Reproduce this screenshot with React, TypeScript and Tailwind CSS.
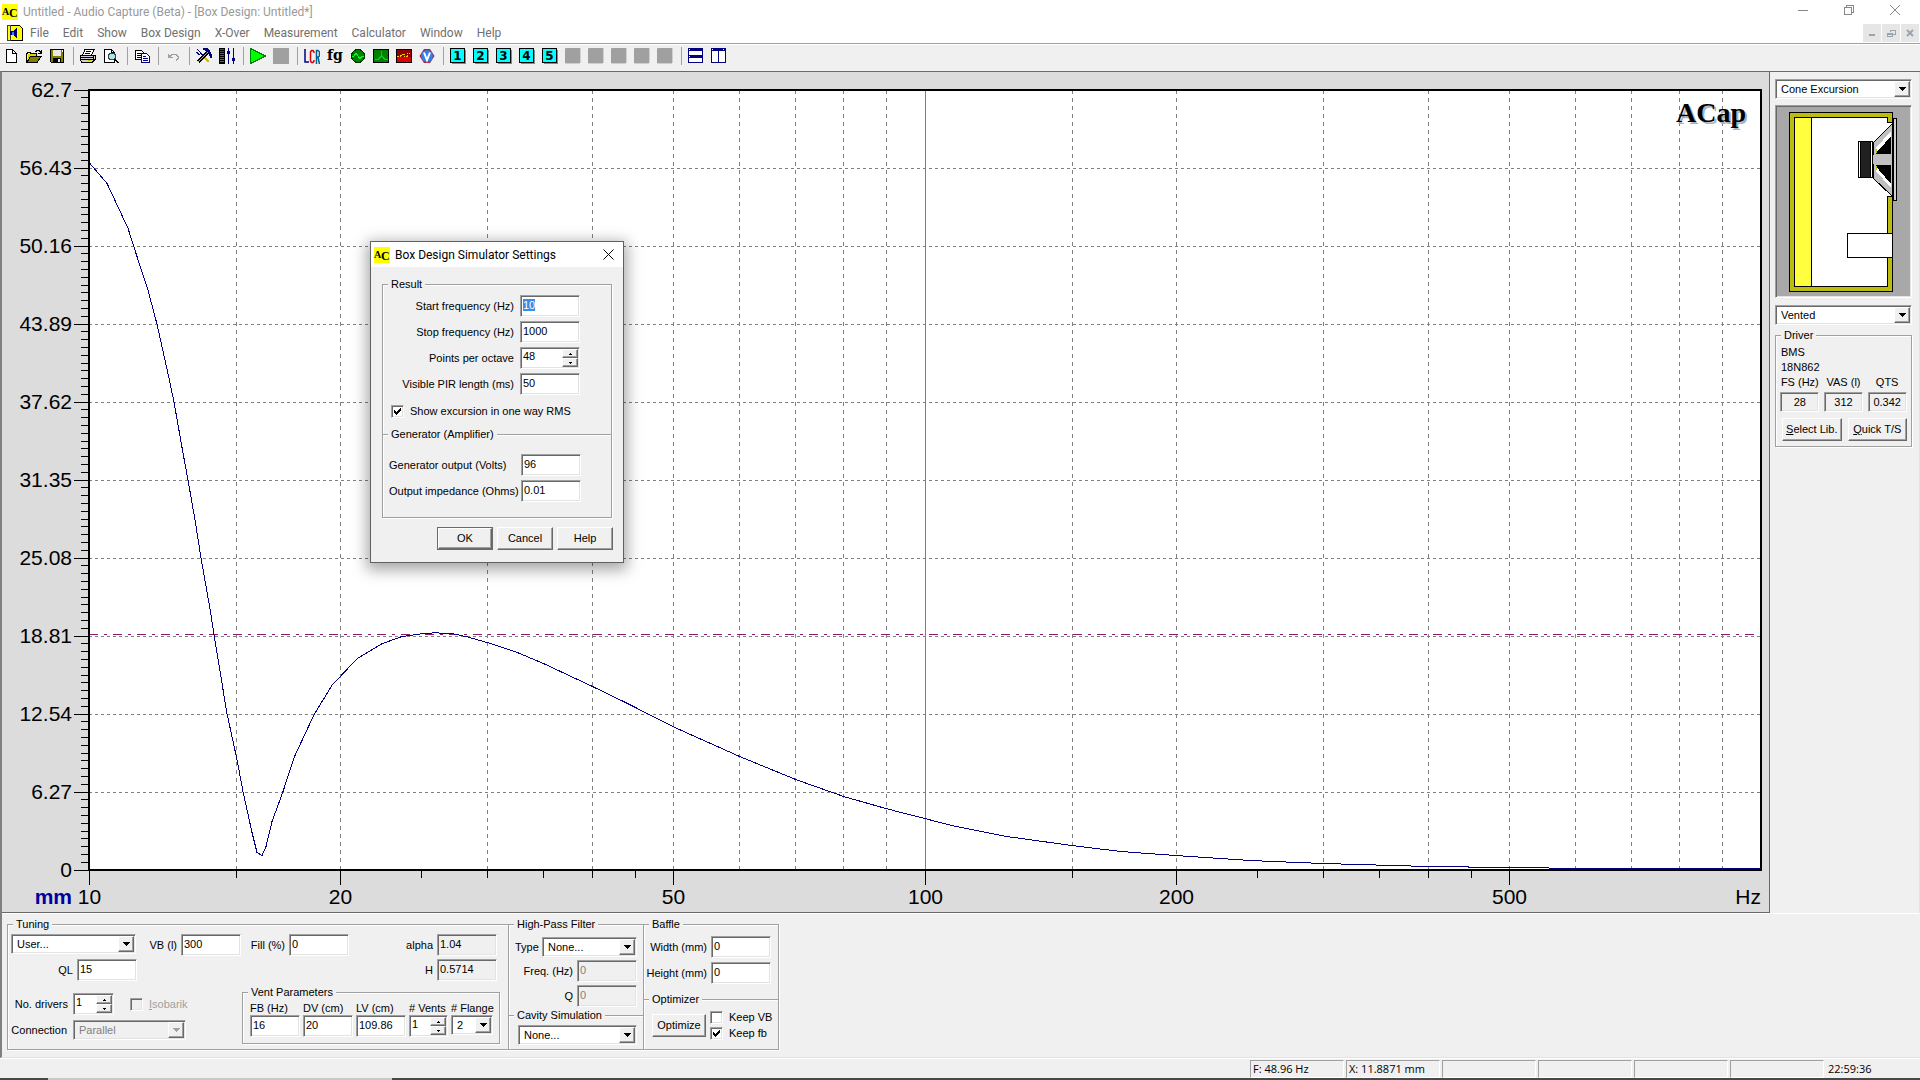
import React, { useEffect, useId, useRef, useState } from "react";

const bevelIn =
  "border border-t-[#a0a0a0] border-l-[#a0a0a0] border-r-white border-b-white shadow-[inset_1px_1px_0_#696969,inset_-1px_-1px_0_#e3e3e3]";
const bevelOut =
  "border border-t-white border-l-white border-r-[#696969] border-b-[#696969] shadow-[inset_-1px_-1px_0_#a0a0a0] bg-[#f0f0f0]";

/* ---------- form controls ---------- */

function TextBox({
  id,
  value,
  width = "w-[60px]",
  disabled = false,
  readOnly = false,
  selected = false,
  center = false,
  label,
}: {
  id?: string;
  value: string;
  width?: string;
  disabled?: boolean;
  readOnly?: boolean;
  selected?: boolean;
  center?: boolean;
  label?: string;
}) {
  const ref = useRef<HTMLInputElement>(null);
  useEffect(() => {
    if (selected && ref.current) {
      ref.current.focus();
      ref.current.select();
    }
  }, [selected]);
  return (
    <input
      ref={ref}
      id={id}
      aria-label={label}
      type="text"
      defaultValue={value}
      disabled={disabled}
      readOnly={readOnly}
      className={`${width} ${bevelIn} ${disabled || readOnly ? "bg-[#f0f0f0]" : "bg-white"} ${
        disabled ? "text-[#808080]" : "text-black"
      } ${center ? "h-5 px-0 text-center" : "h-[22px] pb-[3px] pl-0.5"} shrink-0 outline-none selection:bg-[#3a8ee6] selection:text-white`}
    />
  );
}

function Field({
  label,
  gap = "gap-1",
  className = "",
  ...box
}: {
  label: string;
  gap?: string;
  className?: string;
  value: string;
  width?: string;
  disabled?: boolean;
  readOnly?: boolean;
  selected?: boolean;
}) {
  const id = useId();
  return (
    <div className={`flex items-center justify-end whitespace-nowrap ${gap} ${className}`}>
      <label htmlFor={id}>{label}</label>
      <TextBox id={id} {...box} />
    </div>
  );
}

function Spinner({ id, value, width }: { id: string; value: string; width: string }) {
  return (
    <div className={`flex h-[22px] shrink-0 ${width} ${bevelIn} bg-white p-px`}>
      <input id={id} type="text" defaultValue={value} className="min-w-0 flex-1 bg-transparent pb-[3px] pl-px outline-none" />
      <div className="flex w-4 flex-col">
        <button aria-label="Increase" className={`flex flex-1 items-center justify-center ${bevelOut}`}>
          <svg width="3" height="2" shapeRendering="crispEdges">
            <path d="M1 0h1v1h1v1H0V1h1z" />
          </svg>
        </button>
        <button aria-label="Decrease" className={`flex flex-1 items-center justify-center ${bevelOut}`}>
          <svg width="3" height="2" shapeRendering="crispEdges">
            <path d="M0 0h3v1H2v1H1V1H0z" />
          </svg>
        </button>
      </div>
    </div>
  );
}

function DropDown({
  id,
  value,
  width = "w-full",
  disabled = false,
  label,
}: {
  id?: string;
  value: string;
  width?: string;
  disabled?: boolean;
  label?: string;
}) {
  return (
    <div className={`relative h-5 ${width}`}>
      <select
        id={id}
        aria-label={label}
        disabled={disabled}
        className={`h-full w-full appearance-none pl-[5px] ${bevelIn} ${
          disabled ? "bg-[#f0f0f0] text-[#808080] opacity-100" : "bg-white text-black"
        } outline-none`}
      >
        <option>{value}</option>
      </select>
      <span className={`pointer-events-none absolute inset-y-0.5 right-0.5 flex w-4 items-center justify-center ${bevelOut}`}>
        <svg width="7" height="4" shapeRendering="crispEdges" fill={disabled ? "#a0a0a0" : "#000"}>
          <path d="M0 0h7v1H6v1H5v1H4v1H3V3H2V2H1V1H0z" />
        </svg>
      </span>
    </div>
  );
}

function Check({ label, checked = false, disabled = false }: { label: React.ReactNode; checked?: boolean; disabled?: boolean }) {
  return (
    <label className={`flex items-center gap-1.5 whitespace-nowrap ${disabled ? "text-[#a0a0a0]" : ""}`}>
      <span className="relative flex h-[13px] w-[13px]">
        <input
          type="checkbox"
          defaultChecked={checked}
          disabled={disabled}
          className={`h-[13px] w-[13px] appearance-none ${bevelIn} ${disabled ? "bg-[#f0f0f0]" : "bg-white"}`}
        />
        {checked && (
          <svg className="pointer-events-none absolute inset-0" width="13" height="13" shapeRendering="crispEdges">
            <path d="M3 5h1v1h1v1h1V6h1V5h1V4h1V3h1v3H9v1H8v1H7v1H6v1H5V9H4V8H3z" />
          </svg>
        )}
      </span>
      <span>{label}</span>
    </label>
  );
}

function Button({ children, className = "", primary = false }: { children: React.ReactNode; className?: string; primary?: boolean }) {
  return (
    <button className={`flex items-center justify-center ${primary ? "border border-[#696969]" : ""} ${className}`}>
      <span className={`flex h-full w-full items-center justify-center ${bevelOut}`}>{children}</span>
    </button>
  );
}

function Group({ title, className = "", children }: { title: string; className?: string; children: React.ReactNode }) {
  return (
    <fieldset
      className={`min-w-0 border border-[#a0a0a0] px-[3px] shadow-[inset_1px_1px_0_#fff,1px_1px_0_#fff] ${className}`}
    >
      <legend className="ml-0.5 bg-[#f0f0f0] px-[3px] leading-[13px]">{title}</legend>
      {children}
    </fieldset>
  );
}

/* ---------- icons ---------- */

function AppIcon() {
  return (
    <svg width="16" height="16" viewBox="0 0 16 16" className="shrink-0">
      <rect width="16" height="16" fill="#ff0" />
      <text x="0" y="11" fontFamily="Liberation Serif" fontWeight="700" fontSize="10">
        A
      </text>
      <text x="7" y="13" fontFamily="Liberation Serif" fontWeight="700" fontSize="12">
        C
      </text>
    </svg>
  );
}

function Pixel({ children }: { children: React.ReactNode }) {
  return (
    <svg width="16" height="16" viewBox="0 0 16 16" shapeRendering="crispEdges" fill="none" stroke="none" className="shrink-0">
      {children}
    </svg>
  );
}

const DocIcon = () => (
  <Pixel>
    <path d="M3.5 1.5h6l4 4v9h-10z" fill="#fff" stroke="#000" />
    <path d="M9.5 1.5v4h4" stroke="#000" />
  </Pixel>
);
const OpenIcon = () => (
  <Pixel>
    <path d="M1 5h1V4h4v1h6v3H5L2 14H1z" fill="#ff0" />
    <path d="M2 6h9v2H4l-2 4z" fill="#d8d800" />
    <path d="M.5 14V5.5h1v-1h3v1h6V8" stroke="#000" />
    <path d="M1 14l3.5-5.5H15L11.5 14z" fill="#808000" stroke="#000" />
    <path d="M9 3.5h1v-1h3v1h1v1M15 2v4M12 5h3" stroke="#000" />
  </Pixel>
);
const SaveIcon = () => (
  <Pixel>
    <path d="M1.5 1.5h13v13h-12l-1-1z" fill="#808000" stroke="#000" />
    <rect x="4" y="2" width="8" height="6" fill="#e8e8e8" />
    <rect x="4" y="10" width="8" height="5" fill="#000" />
    <rect x="9" y="11" width="2" height="3" fill="#e8e8e8" />
    <rect x="13" y="2" width="1" height="2" fill="#fff" />
  </Pixel>
);
const PrintIcon = () => (
  <Pixel>
    <path d="M5 1.5h9L11.5 7H2.5z" fill="#fff" stroke="#000" />
    <path d="M6 3.5h5M5 5.5h5" stroke="#000" />
    <path d="M1 7.5h14v4L12.5 14h-11L.5 12z" fill="#d0d0d0" stroke="#000" />
    <path d="M1 9.5h12M1 11.5h12M13.5 8v5" stroke="#000" />
    <rect x="8" y="12" width="3" height="1" fill="#c8c800" />
  </Pixel>
);
const PreviewIcon = () => (
  <Pixel>
    <path d="M1.5 1.5h7l3 3v10h-10z" fill="#fff" stroke="#000" />
    <path d="M8.5 1.5v3h3" stroke="#000" />
    <circle cx="9" cy="8.5" r="3.5" fill="#a8e8e8" stroke="#404040" />
    <path d="M11.5 11l4 4" stroke="#000" strokeWidth="2" />
  </Pixel>
);
const CopyIcon = () => (
  <Pixel>
    <path d="M1.5 2.5h6l2 2v7h-8z" fill="#fff" stroke="#000" />
    <path d="M3 5.5h4M3 7.5h5M3 9.5h5" stroke="#000" />
    <path d="M7.5 5.5h5l3 3v6h-8z" fill="#fff" stroke="#000080" />
    <path d="M9 8.5h3M9 10.5h5M9 12.5h5" stroke="#000080" />
  </Pixel>
);
const UndoIcon = () => (
  <Pixel>
    <path d="M3 6h1v1h1v1h1v1h2v1H3z" fill="#a0a0a0" />
    <path d="M5 8.5l2-2h4l2 2v2l-2 2" stroke="#a0a0a0" />
  </Pixel>
);
const ToolsIcon = () => (
  <Pixel>
    <path d="M1 1l12 13M0 4l4 3" stroke="#000080" />
    <path d="M12 4L2 14" stroke="#000" strokeWidth="3" />
    <path d="M12 4L2 14" stroke="#c8b820" />
    <path d="M7 0h4l3 3 2 4v3h-2l-1-4-3-3-3-1z" fill="#000080" />
    <path d="M9 10l4 4" stroke="#c8b820" strokeWidth="2" />
  </Pixel>
);
const MixerIcon = () => (
  <Pixel>
    <rect width="6" height="16" fill="#000" />
    <path d="M1 1.5h4M1 3.5h4" stroke="#f00" />
    <path d="M1 5.5h4M1 7.5h4M1 9.5h4M1 11.5h4M1 13.5h4" stroke="#00a020" />
    <path d="M9.5 0v16M14.5 0v16" stroke="#000080" />
    <path d="M8 3h3v3H8zM13 10h3v3h-3z" fill="#000080" />
  </Pixel>
);
const PlayIcon = () => (
  <Pixel>
    <path d="M.5.5v15L15.5 8z" fill="#0f0" stroke="#008000" />
  </Pixel>
);
const StopIcon = () => (
  <Pixel>
    <rect width="16" height="16" fill="#a0a0a0" />
  </Pixel>
);
const LcrIcon = () => (
  <svg width="16" height="16" viewBox="0 0 16 16" fill="none">
    <path d="M1 1v13h4" stroke="#000080" strokeWidth="1.5" />
    <path d="M10 5V4L9 2.5H7.5L6.500 4v9l1 1.500H9l1-1.500v-1" stroke="#e00000" strokeWidth="1.5" />
    <path d="M12.5 16V2.5H14l1.500 1.500v4L14 9h-1.500M14 9l1.500 7" stroke="#006090" strokeWidth="1.5" />
  </svg>
);
const FgIcon = () => (
  <svg width="16" height="16" viewBox="0 0 16 16">
    <text x="0" y="12" fontFamily="DejaVu Serif" fontWeight="700" fontSize="14">
      fg
    </text>
  </svg>
);
const SineIcon = () => (
  <Pixel>
    <circle cx="8" cy="8" r="6.5" fill="#008000" stroke="#003000" />
    <path d="M2 8h2l2-3 4 6 2-3h2" stroke="#00ff20" />
  </Pixel>
);
const SpectrumIcon = () => (
  <Pixel>
    <rect x=".5" y="1.5" width="15" height="13" fill="#008000" stroke="#000" />
    <path d="M8.5 3v5l-3 3H2M8.5 8l3 3h3" stroke="#00d020" />
  </Pixel>
);
const WaveIcon = () => (
  <Pixel>
    <rect x=".5" y="1.5" width="15" height="13" fill="#900000" stroke="#000" />
    <rect x="1" y="9" width="14" height="5" fill="#e00000" />
    <path d="M1 8.5h3l2-2h2v2h3v-3h3" stroke="#ffd000" strokeDasharray="2 1" />
  </Pixel>
);
const VoltIcon = () => (
  <svg width="16" height="16" viewBox="0 0 16 16">
    <path d="M5 1h6l2 3 2.500 4L13 12l-2 3H5l-2-3L.5 8 3 4z" fill="#b02040" />
    <circle cx="8" cy="8" r="6" fill="#3080e8" />
    <path d="M5 4.500L8 12l3-7.500" stroke="#fff" strokeWidth="2" fill="none" />
  </svg>
);
const NumIcon = ({ n }: { n: number }) => (
  <svg width="16" height="16" viewBox="0 0 16 16">
    <path d="M2 15h13V2h1v14H2z" fill="#888" />
    <rect x=".5" y=".5" width="14" height="14" fill="#0ff" stroke="#000" />
    <text x="7.5" y="12" textAnchor="middle" fontFamily="DejaVu Sans" fontWeight="700" fontSize="12">
      {n}
    </text>
  </svg>
);
const BlankIcon = () => (
  <svg width="16" height="16" viewBox="0 0 16 16">
    <rect x="1" y="1" width="15" height="15" rx="1" fill="#fff" />
    <rect width="15.5" height="15.5" rx="1" fill="#a0a0a0" />
  </svg>
);
const TileHIcon = () => (
  <Pixel>
    <rect x="0" y="0" width="15" height="15" fill="#000080" />
    <path d="M1 3h13v4H1zM1 10h13v4H1z" fill="#fff" />
    <path d="M1 1h1v1H1zM1 8h1v1H1z" fill="#fff" />
  </Pixel>
);
const TileVIcon = () => (
  <Pixel>
    <rect x="0" y="0" width="15" height="15" fill="#000080" />
    <path d="M1 3h6v11H1zM8 3h6v11H8z" fill="#fff" />
    <path d="M1 1h1v1H1zM12 1h1v1h-1z" fill="#fff" />
  </Pixel>
);

/* ---------- title, menu and tool bars ---------- */

function TitleBar() {
  return (
    <header className="flex h-[23px] items-center bg-white pl-0.5 font-[Roboto,sans-serif] text-xs text-[#999]">
      <AppIcon />
      <h1 className="ml-[5px] flex-1 whitespace-nowrap">Untitled - Audio Capture (Beta) - [Box Design: Untitled*]</h1>
      <div className="flex h-full items-center pr-0.5 pb-[3px] text-[#888]">
        <button aria-label="Minimize" className="flex w-[46px] justify-center">
          <svg width="10" height="10" shapeRendering="crispEdges">
            <path d="M0 5.5h10" stroke="currentColor" />
          </svg>
        </button>
        <button aria-label="Restore" className="flex w-[46px] justify-center">
          <svg width="10" height="10" fill="none" stroke="currentColor" shapeRendering="crispEdges">
            <path d="M.5 2.5h7v7h-7zM2.5 2V.5h7v7H8" />
          </svg>
        </button>
        <button aria-label="Close" className="flex w-[46px] justify-center">
          <svg width="10" height="10" stroke="currentColor">
            <path d="M0 0l10 10M10 0L0 10" />
          </svg>
        </button>
      </div>
    </header>
  );
}

const menus = ["File", "Edit", "Show", "Box Design", "X-Over", "Measurement", "Calculator", "Window", "Help"];

function MenuBar() {
  const mdi = "flex h-[18px] w-[18px] items-center justify-center bg-[#e6e6e6] text-[#9aa5b0]";
  return (
    <nav className="flex h-5 items-center bg-white pl-[7px] font-[Roboto,sans-serif] text-xs text-[#707070]">
      <Pixel>
        <path d="M2.5.5h10l3 3v12h-13z" fill="#ff0" stroke="#000" />
        <path d="M.5.5h3v15h-3z" fill="#ff0" stroke="#404040" />
        <path d="M3 6h3l4-4v12l-4-4H3z" fill="#000080" />
        <path d="M5 7h2v3H5z" fill="#4080ff" />
      </Pixel>
      <ul className="flex flex-1 gap-[14px] pl-[7px]">
        {menus.map((m) => (
          <li key={m}>
            <button className="whitespace-nowrap">{m}</button>
          </li>
        ))}
      </ul>
      <div className="flex gap-px pr-px">
        <button aria-label="Minimize child" className={mdi}>
          <svg width="8" height="8">
            <path d="M1 6h6" stroke="currentColor" strokeWidth="2" />
          </svg>
        </button>
        <button aria-label="Restore child" className={mdi}>
          <svg width="9" height="9" fill="none" stroke="currentColor" shapeRendering="crispEdges">
            <path d="M.5 4.5h5v3h-5zM3 3V1.5h5v4H6M1 5h4M3 1h6" />
          </svg>
        </button>
        <button aria-label="Close child" className={mdi}>
          <svg width="8" height="8" stroke="currentColor" strokeWidth="2">
            <path d="M1 1l6 6M7 1L1 7" />
          </svg>
        </button>
      </div>
    </nav>
  );
}

const tools: ([string, React.ReactNode] | null)[] = [
  ["New", <DocIcon />],
  ["Open", <OpenIcon />],
  ["Save", <SaveIcon />],
  null,
  ["Print", <PrintIcon />],
  ["Print preview", <PreviewIcon />],
  null,
  ["Copy", <CopyIcon />],
  null,
  ["Undo", <UndoIcon />],
  null,
  ["Settings", <ToolsIcon />],
  ["Mixer", <MixerIcon />],
  null,
  ["Start", <PlayIcon />],
  ["Stop", <StopIcon />],
  null,
  ["LCR meter", <LcrIcon />],
  ["Function generator", <FgIcon />],
  ["Oscilloscope", <SineIcon />],
  ["Spectrum", <SpectrumIcon />],
  ["Waveform", <WaveIcon />],
  ["Voltmeter", <VoltIcon />],
  null,
  ["Curve 1", <NumIcon n={1} />],
  ["Curve 2", <NumIcon n={2} />],
  ["Curve 3", <NumIcon n={3} />],
  ["Curve 4", <NumIcon n={4} />],
  ["Curve 5", <NumIcon n={5} />],
  ["Curve 6", <BlankIcon />],
  ["Curve 7", <BlankIcon />],
  ["Curve 8", <BlankIcon />],
  ["Curve 9", <BlankIcon />],
  ["Curve 10", <BlankIcon />],
  null,
  ["Tile horizontally", <TileHIcon />],
  ["Tile vertically", <TileVIcon />],
];

function ToolBar() {
  return (
    <div role="toolbar" className="flex h-7 items-center border-t border-[#a0a0a0] pb-[3px] shadow-[inset_0_1px_0_#fff]">
      {tools.map((t, i) =>
        t ? (
          <button key={i} aria-label={t[0]} className="flex w-[23px] pl-[3px]">
            {t[1]}
          </button>
        ) : (
          <span key={i} className="flex w-2 justify-center">
            <span className="h-[18px] w-px bg-[#a0a0a0]" />
          </span>
        ),
      )}
    </div>
  );
}

/* ---------- excursion chart ---------- */

const yLabels = ["62.7", "56.43", "50.16", "43.89", "37.62", "31.35", "25.08", "18.81", "12.54", "6.27", "0"];
const gridFreqs = [15, 20, 30, 40, 50, 60, 70, 80, 90, 150, 200, 300, 400, 500, 600, 700, 800, 900];
const minorTicks = [15, 25, 30, 35, 40, 45, 150, 250, 300, 350, 400, 450];
const majorTicks = [10, 20, 50, 100, 200, 500];

// Samples on a 1672 x 781 field, measured from its top left corner.
const samples: [number, number][] = [
  [0, 72], [18, 93], [39, 138], [45, 157], [59, 200], [68, 234], [80, 288], [85, 312], [94, 363], [99, 390],
  [106, 430], [112, 468], [121, 519], [125, 545], [138, 624], [148, 670], [154, 702], [163, 743], [168, 763],
  [173, 766], [177, 757], [183, 732], [194, 702], [205, 668], [225, 625], [244, 594], [252, 586], [268, 569],
  [293, 554], [312, 547], [332, 544], [346, 543], [364, 544], [378, 547], [399, 553], [429, 563], [455, 574],
  [504, 597], [539, 614], [584, 637], [651, 667], [707, 690], [755, 707], [797, 719], [836, 729], [863, 736],
  [918, 747], [983, 756], [1032, 762], [1087, 766], [1161, 771], [1234, 774], [1340, 777], [1419, 778],
  [1501, 779], [1672, 779],
];

function Chart() {
  const box = useRef<HTMLDivElement>(null);
  const [size, setSize] = useState({ w: 1767, h: 841 });
  useEffect(() => {
    const el = box.current;
    if (!el) return;
    const read = () => setSize({ w: el.clientWidth, h: el.clientHeight });
    read();
    const ro = new ResizeObserver(read);
    ro.observe(el);
    return () => ro.disconnect();
  }, []);

  const { w, h } = size;
  const L = 87;
  const T = 18;
  const R = w - 8;
  const B = h - 42;
  const fx = (f: number) => Math.floor(L + (Math.log10(f / 10) / 2) * (R - L)) + 0.5;
  const fy = (i: number) => Math.floor(T + (i / 10) * (B - T)) + 0.5;
  const curve = samples.map(([x, y]) => `${L + (x / 1672) * (R - L)},${T + (y / 781) * (B - T) + 0.5}`).join(" ");

  return (
    <div ref={box} className="min-h-0 min-w-0 flex-1 overflow-hidden border-r border-b border-[#696969] bg-[#dcdcdc]">
      <svg width={w} height={h} className="block" fontFamily="Liberation Sans, sans-serif" fontSize="21">
        <g shapeRendering="crispEdges" fill="none">
          <rect x={L} y={T} width={R - L} height={B - T} fill="#fff" />
          <g stroke="#808080">
            {gridFreqs.map((f) => (
              <path key={f} d={`M${fx(f)} ${T}V${B}`} strokeDasharray="4 4" />
            ))}
            {yLabels.slice(1, -1).map((l, i) => (
              <path key={l} d={`M${L} ${fy(i + 1)}H${R}`} strokeDasharray="3 3" />
            ))}
            <path d={`M${fx(100)} ${T}V${B}`} />
          </g>
          <path d={`M${L} ${fy(7) - 2}H${R}`} stroke="#8b1a6b" strokeDasharray="9 6 3 6" />
          <polyline points={curve} stroke="#000080" />
          <rect x={L} y={T} width={R - L} height={B - T} stroke="#000" strokeWidth="2" />
          <g stroke="#000">
            {Array.from({ length: 101 }, (_, i) => (
              <path key={i} d={`M${i % 10 ? L - 8 : L - 15} ${fy(i / 10)}H${L}`} />
            ))}
            {minorTicks.map((f) => (
              <path key={f} d={`M${fx(f)} ${B}v8`} />
            ))}
            {majorTicks.map((f) => (
              <path key={f} d={`M${fx(f)} ${B}v15`} />
            ))}
          </g>
        </g>
        {yLabels.map((l, i) => (
          <text key={l} x={L - 17} y={fy(i) + 6} textAnchor="end">
            {l}
          </text>
        ))}
        {majorTicks.map((f) => (
          <text key={f} x={fx(f)} y={B + 34} textAnchor="middle">
            {f}
          </text>
        ))}
        <text x={L - 17} y={B + 34} textAnchor="end" fontWeight="700" fill="#0000a0">
          mm
        </text>
        <text x={R} y={B + 34} textAnchor="end">
          Hz
        </text>
        <g fontFamily="Liberation Serif, serif" fontWeight="700" fontSize="28" textAnchor="end">
          <text x={R - 13} y={T + 34} fill="#a4b4c4">
            ACap
          </text>
          <text x={R - 15} y={T + 32}>
            ACap
          </text>
        </g>
      </svg>
    </div>
  );
}

/* ---------- side panel ---------- */

function Cabinet() {
  return (
    <svg width="132" height="189" viewBox="2 2 132 189" className="block" shapeRendering="crispEdges" stroke="#000">
      <rect x="13.5" y="7.5" width="103" height="179" fill="#bcbc10" />
      <rect x="18.5" y="12.5" width="93" height="169" fill="#fff" />
      <rect x="18.5" y="12.5" width="17" height="169" fill="#ffff40" />
      <rect x="111" y="18" width="6" height="73" fill="#fff" stroke="none" />
      <path d="M111 17.5h6M111 91.5h6" />
      <path d="M97 38L116 19v72L97 73z" fill="#c0c0c0" />
      <path d="M100 43l15-17v23h-15zM100 60h15v23l-15-17z" fill="#fff" stroke="none" />
      <path d="M103 45l12-14v18h-15v-2zM103 65l12 14V60h-15v2z" fill="#000" stroke="none" />
      <path d="M100 44h1v4h-1zM100 61h1v4h-1z" fill="#bcbc10" stroke="none" />
      <path d="M97 50h18v9H97z" fill="#c0c0c0" stroke="none" />
      <rect x="82.5" y="36.5" width="14" height="36" fill="#fff" />
      <rect x="84.5" y="36.5" width="10" height="36" fill="#202020" />
      <rect x="117.5" y="13.5" width="3" height="82" fill="#d0d0d0" />
      <rect x="71.5" y="128.5" width="45" height="24" fill="#fff" />
    </svg>
  );
}

function SidePanel() {
  const stats = [
    ["FS (Hz)", "28"],
    ["VAS (l)", "312"],
    ["QTS", "0.342"],
  ];
  return (
    <aside className="flex w-[150px] shrink-0 flex-col border-r border-[#e3e3e3] pt-[7px] pr-[7px] pl-[5px]">
      <DropDown label="Graph" value="Cone Excursion" />
      <div className={`mt-1.5 flex h-[193px] justify-center bg-[#a8a8a8] pt-px ${bevelIn}`}>
        <Cabinet />
      </div>
      <div className="mt-[7px]">
        <DropDown label="Box type" value="Vented" />
      </div>
      <Group title="Driver" className="mt-1 pb-[5px]">
        <div className="pt-[3px] pl-0.5 leading-[15px]">
          <p>BMS</p>
          <p>18N862</p>
        </div>
        <div className="grid grid-cols-3 gap-x-0.5 text-center leading-[15px]">
          {stats.map(([k, v]) => (
            <label key={k} className="flex flex-col items-center gap-0.5 whitespace-nowrap">
              {k}
              <TextBox value={v} width="w-[39px]" center readOnly />
            </label>
          ))}
        </div>
        <div className="mt-1.5 flex gap-1.5 pr-px pl-[3px]">
          <Button className="h-[23px] flex-1 whitespace-nowrap">
            <span>
              <u>S</u>elect Lib.
            </span>
          </Button>
          <Button className="h-[23px] flex-1 whitespace-nowrap">
            <span>
              <u>Q</u>uick T/S
            </span>
          </Button>
        </div>
      </Group>
    </aside>
  );
}

/* ---------- design panel ---------- */

function DesignPanel() {
  const id = useId();
  return (
    <section className="flex border-t border-white pt-1 pb-[7px] pl-[5px]">
      <Group title="Tuning" className="w-[502px] pb-1">
        <div className="flex items-start pt-[3px]">
          <DropDown label="Tuning" value="User..." width="w-[125px]" />
          <Field label="VB (l)" value="300" className="w-[105px]" />
          <Field label="Fill (%)" value="0" className="w-[108px]" />
          <Field label="alpha" value="1.04" className="w-[148px]" readOnly />
        </div>
        <div className="flex justify-between pt-[3px]">
          <Field label="QL" value="15" className="w-[126px]" />
          <Field label="H" value="0.5714" className="mr-2 w-[110px]" readOnly />
        </div>
        <div className="flex justify-between pt-1">
          <div className="flex flex-col gap-[5px] pt-2">
            <div className="flex items-center">
              <label htmlFor={`${id}n`} className="w-[58px] pr-px text-right whitespace-nowrap">
                No. drivers
              </label>
              <div className="mr-4 ml-1">
                <Spinner id={`${id}n`} value="1" width="w-[41px]" />
              </div>
              <Check
                disabled
                label={
                  <>
                    <u>I</u>sobarik
                  </>
                }
              />
            </div>
            <div className="flex items-center">
              <label htmlFor={`${id}c`} className="w-[58px] pr-0.5 text-right">
                Connection
              </label>
              <div className="ml-1">
                <DropDown id={`${id}c`} value="Parallel" width="w-[113px]" disabled />
              </div>
            </div>
          </div>
          <Group title="Vent Parameters" className="mt-px mr-[5px] w-[258px] pb-1.5">
            <div className="flex gap-[3px] pt-[3px] pl-1 leading-[13px] whitespace-nowrap">
              {[
                ["FB (Hz)", "16"],
                ["DV (cm)", "20"],
                ["LV (cm)", "109.86"],
              ].map(([k, v]) => (
                <label key={k} className="flex w-[50px] flex-col">
                  {k}
                  <TextBox value={v} width="w-[50px]" />
                </label>
              ))}
              <div className="flex w-[39px] flex-col">
                <label htmlFor={`${id}v`}># Vents</label>
                <Spinner id={`${id}v`} value="1" width="w-[39px]" />
              </div>
              <div className="flex w-[42px] flex-col">
                <label htmlFor={`${id}f`}># Flange</label>
                <DropDown id={`${id}f`} value="2" width="w-[42px]" />
              </div>
            </div>
          </Group>
        </div>
      </Group>

      <div className="-ml-px flex w-[136px] flex-col">
        <Group title="High-Pass Filter" className="flex-1 border-b-0 pb-2">
          <div className="flex flex-col gap-[3px] pt-1.5">
            <div className="flex items-center justify-between px-[3px]">
              <label htmlFor={`${id}t`}>Type</label>
              <DropDown id={`${id}t`} value="None..." width="w-[95px]" />
            </div>
            <Field label="Freq. (Hz)" value="0" className="pr-[3px]" disabled />
            <Field label="Q" value="0" className="pr-[3px]" disabled />
          </div>
        </Group>
        <Group title="Cavity Simulation" className="-mt-1.5 pb-1">
          <div className="pt-[3px] pr-[3px] pl-1.5">
            <DropDown label="Cavity Simulation" value="None..." />
          </div>
        </Group>
      </div>

      <div className="-ml-px flex w-[136px] flex-col">
        <Group title="Baffle" className="flex-1 border-b-0">
          <div className="flex flex-col gap-1 pt-[5px] pr-1">
            <Field label="Width (mm)" value="0" />
            <Field label="Height (mm)" value="0" />
          </div>
        </Group>
        <Group title="Optimizer" className="-mt-1.5 pb-[9px]">
          <div className="flex items-center gap-1 pt-[5px] pl-[5px]">
            <Button className="h-[23px] w-[54px]">Optimize</Button>
            <div className="flex flex-col gap-[3px] leading-[13px]">
              <Check label="Keep VB" />
              <Check label="Keep fb" checked />
            </div>
          </div>
        </Group>
      </div>
    </section>
  );
}

/* ---------- settings dialog ---------- */

function SettingsDialog() {
  const id = useId();
  return (
    <div
      role="dialog"
      aria-label="Box Design Simulator Settings"
      className="absolute top-[241px] left-[370px] w-[254px] border border-[#606060] bg-[#f0f0f0] shadow-[0_4px_14px_3px_rgba(0,0,0,0.35)]"
    >
      <div className="flex h-[25px] items-center bg-white pl-[3px] font-[Roboto,sans-serif] text-xs">
        <AppIcon />
        <h2 className="ml-[5px] flex-1 whitespace-nowrap">Box Design Simulator Settings</h2>
        <button aria-label="Close" className="flex w-[30px] justify-center">
          <svg width="11" height="11" stroke="#000">
            <path d="M.5.5l10 10M10.5.5l-10 10" />
          </svg>
        </button>
      </div>
      <form className="px-[11px] pt-[11px] pb-3" onSubmit={(e) => e.preventDefault()}>
        <Group title="Result" className="border-b-0 pb-4">
          <div className="flex w-[194px] flex-col gap-1 pt-1">
            <Field label="Start frequency (Hz)" value="10" gap="gap-1.5" selected />
            <Field label="Stop frequency (Hz)" value="1000" gap="gap-1.5" />
            <div className="flex items-center gap-1.5">
              <label htmlFor={id} className="flex-1 text-right">
                Points per octave
              </label>
              <Spinner id={id} value="48" width="w-[60px]" />
            </div>
            <Field label="Visible PIR length (ms)" value="50" gap="gap-1.5" />
          </div>
          <div className="mt-2.5 pl-[5px]">
            <Check label="Show excursion in one way RMS" checked />
          </div>
        </Group>
        <Group title="Generator (Amplifier)" className="-mt-1.5 pb-[15px]">
          <div className="flex w-[195px] flex-col gap-1 pt-[13px] pl-[3px] whitespace-nowrap">
            <div className="flex items-center justify-between">
              <label htmlFor={`${id}g`}>Generator output (Volts)</label>
              <TextBox id={`${id}g`} value="96" />
            </div>
            <div className="flex items-center justify-between">
              <label htmlFor={`${id}o`}>Output impedance (Ohms)</label>
              <TextBox id={`${id}o`} value="0.01" />
            </div>
          </div>
        </Group>
        <div className="-mr-px mt-[9px] flex justify-end gap-1">
          <Button primary className="h-[23px] w-14">
            OK
          </Button>
          <Button className="h-[23px] w-14">Cancel</Button>
          <Button className="h-[23px] w-14">Help</Button>
        </div>
      </form>
    </div>
  );
}

function StatusBar() {
  const cell = "h-full w-[94px] border border-t-[#a0a0a0] border-l-[#a0a0a0] border-r-white border-b-white pl-0.5";
  return (
    <footer className="flex h-5 items-center justify-end gap-0.5 border-t border-white pt-px pr-[2px] font-['Open_Sans',sans-serif] text-[11px] leading-4 whitespace-nowrap">
      {["F: 48.96 Hz", "X: 11.8871 mm", "", "", "", ""].map((t, i) => (
        <div key={i} className={cell}>
          {t}
        </div>
      ))}
      <time className="w-[92px] pl-0.5">22:59:36</time>
    </footer>
  );
}

export default function App() {
  return (
    <div className="relative flex h-screen flex-col overflow-hidden bg-[#f0f0f0] font-['Liberation_Sans',sans-serif] text-[11px] leading-[13px] text-black">
      <TitleBar />
      <MenuBar />
      <ToolBar />
      <main className="flex min-h-0 flex-1 flex-col border-t border-b border-l-2 border-t-[#696969] border-b-[#e3e3e3] border-l-[#808080]">
        <div className="flex min-h-0 flex-1">
          <Chart />
          <SidePanel />
        </div>
        <DesignPanel />
      </main>
      <StatusBar />
      <div className="flex h-0.5 bg-[#484848]">
        <span className="ml-12 w-[344px] bg-[#c8c8c8]" />
      </div>
      <SettingsDialog />
    </div>
  );
}
